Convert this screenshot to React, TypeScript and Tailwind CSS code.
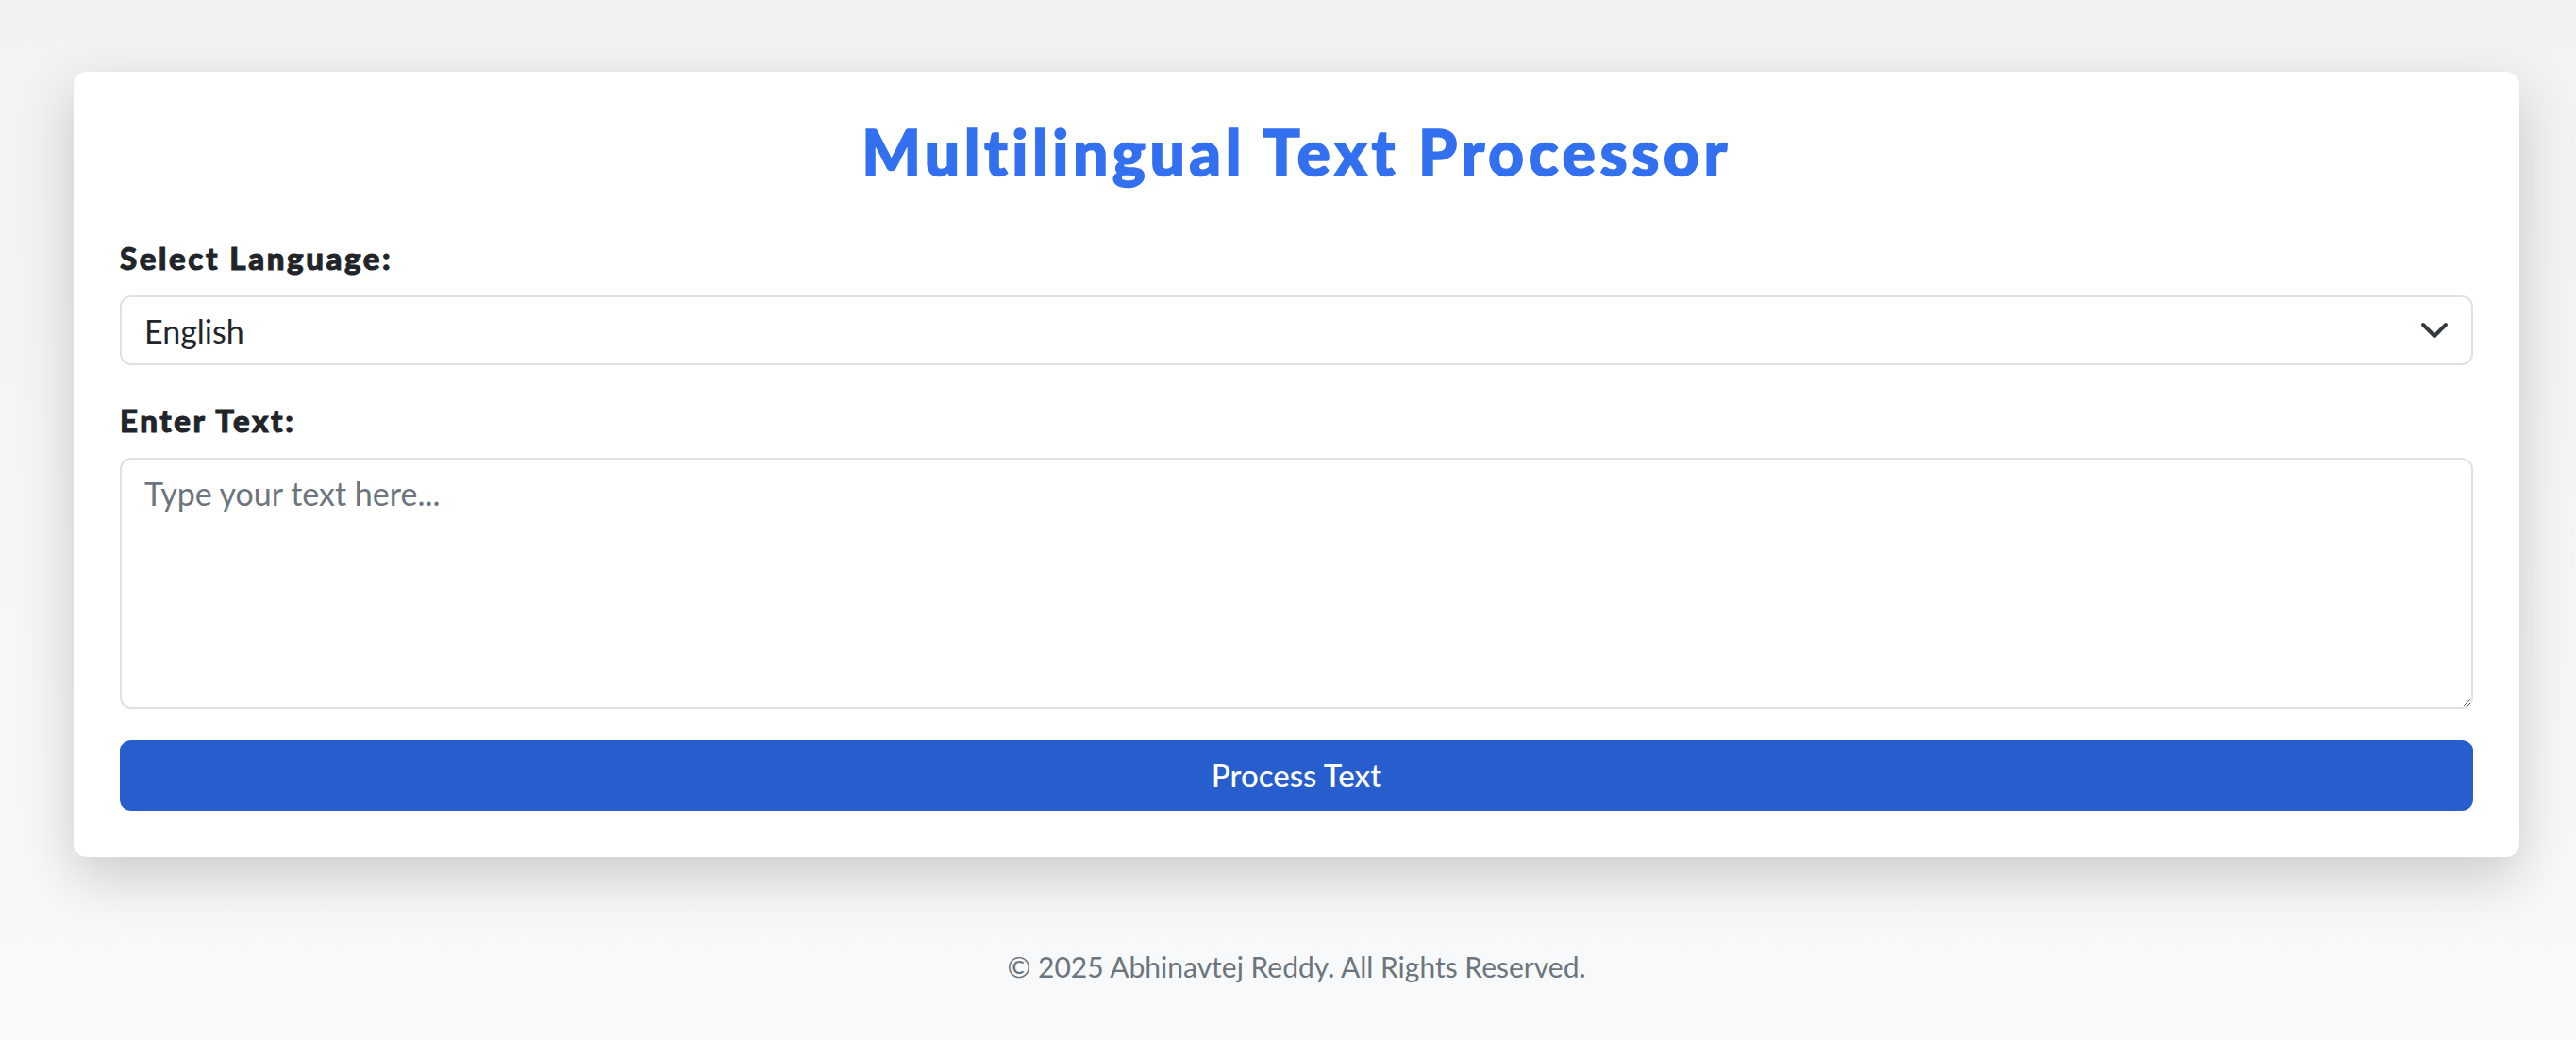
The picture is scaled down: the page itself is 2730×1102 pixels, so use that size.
import { useState } from "react";

const languages = ["English", "Spanish", "French", "German", "Hindi", "Telugu", "Chinese", "Japanese"];

export default function App() {
    const [language, setLanguage] = useState("English");
    const [text, setText] = useState("");

    return (
        <div className="min-h-screen w-full bg-gradient-to-b from-[#f1f2f4] to-[#f8f9fa] font-['Lato',_'Liberation_Sans',_sans-serif] flex flex-col pt-[76px]">
            <div className="ml-[78px] w-[2592px] flex flex-col">
                {/* main card */}
                <div className="bg-white rounded-[14px] shadow-[0_22px_60px_rgba(0,0,0,0.18)] px-[49px] pt-[48px] pb-[49px] flex flex-col">
                    <h1 className="text-center text-[66px] leading-[74px] font-black tracking-[4.5px] text-[#3370f0] [-webkit-text-stroke:1.5px_#3370f0]">
                        Multilingual Text Processor
                    </h1>

                    <label className="mt-[55px] text-[33px] leading-[40px] font-black tracking-[2.6px] text-[#212529] [-webkit-text-stroke:1px_#212529]">Select Language:</label>
                    <div className="relative mt-[20px]">
                        <select
                            value={language}
                            onChange={(e) => setLanguage(e.target.value)}
                            className="w-full h-[74px] appearance-none bg-white border-2 border-[#dee2e6] rounded-[12px] pl-[24px] pr-[80px] text-[34px] text-[#212529] outline-none"
                        >
                            {languages.map((lang) => (
                                <option key={lang} value={lang}>{lang}</option>
                            ))}
                        </select>
                        <svg className="pointer-events-none absolute right-[25px] top-[21px]" width="32" height="32" viewBox="0 0 16 16" fill="none">
                            <path d="m2 5 6 6 6-6" stroke="#343a40" strokeWidth="2" strokeLinecap="round" strokeLinejoin="round" />
                        </svg>
                    </div>

                    <label className="mt-[38px] text-[33px] leading-[40px] font-black tracking-[2.6px] text-[#212529] [-webkit-text-stroke:1px_#212529]">Enter Text:</label>
                    <textarea
                        value={text}
                        onChange={(e) => setText(e.target.value)}
                        placeholder="Type your text here..."
                        className="mt-[20px] h-[266px] w-full border-2 border-[#dee2e6] rounded-[12px] px-[24px] py-[12px] text-[34px] leading-[48px] text-[#212529] placeholder:text-[#6c757d] outline-none"
                    />

                    <button className="mt-[33px] h-[75px] w-full rounded-[12px] bg-[#285dcd] text-white text-[33px] font-medium">
                        Process Text
                    </button>
                </div>

                <p className="mt-[92px] text-center text-[30px] leading-[48px] text-[#6c757d]">
                    © 2025 Abhinavtej Reddy. All Rights Reserved.
                </p>
            </div>
        </div>
    );
}
